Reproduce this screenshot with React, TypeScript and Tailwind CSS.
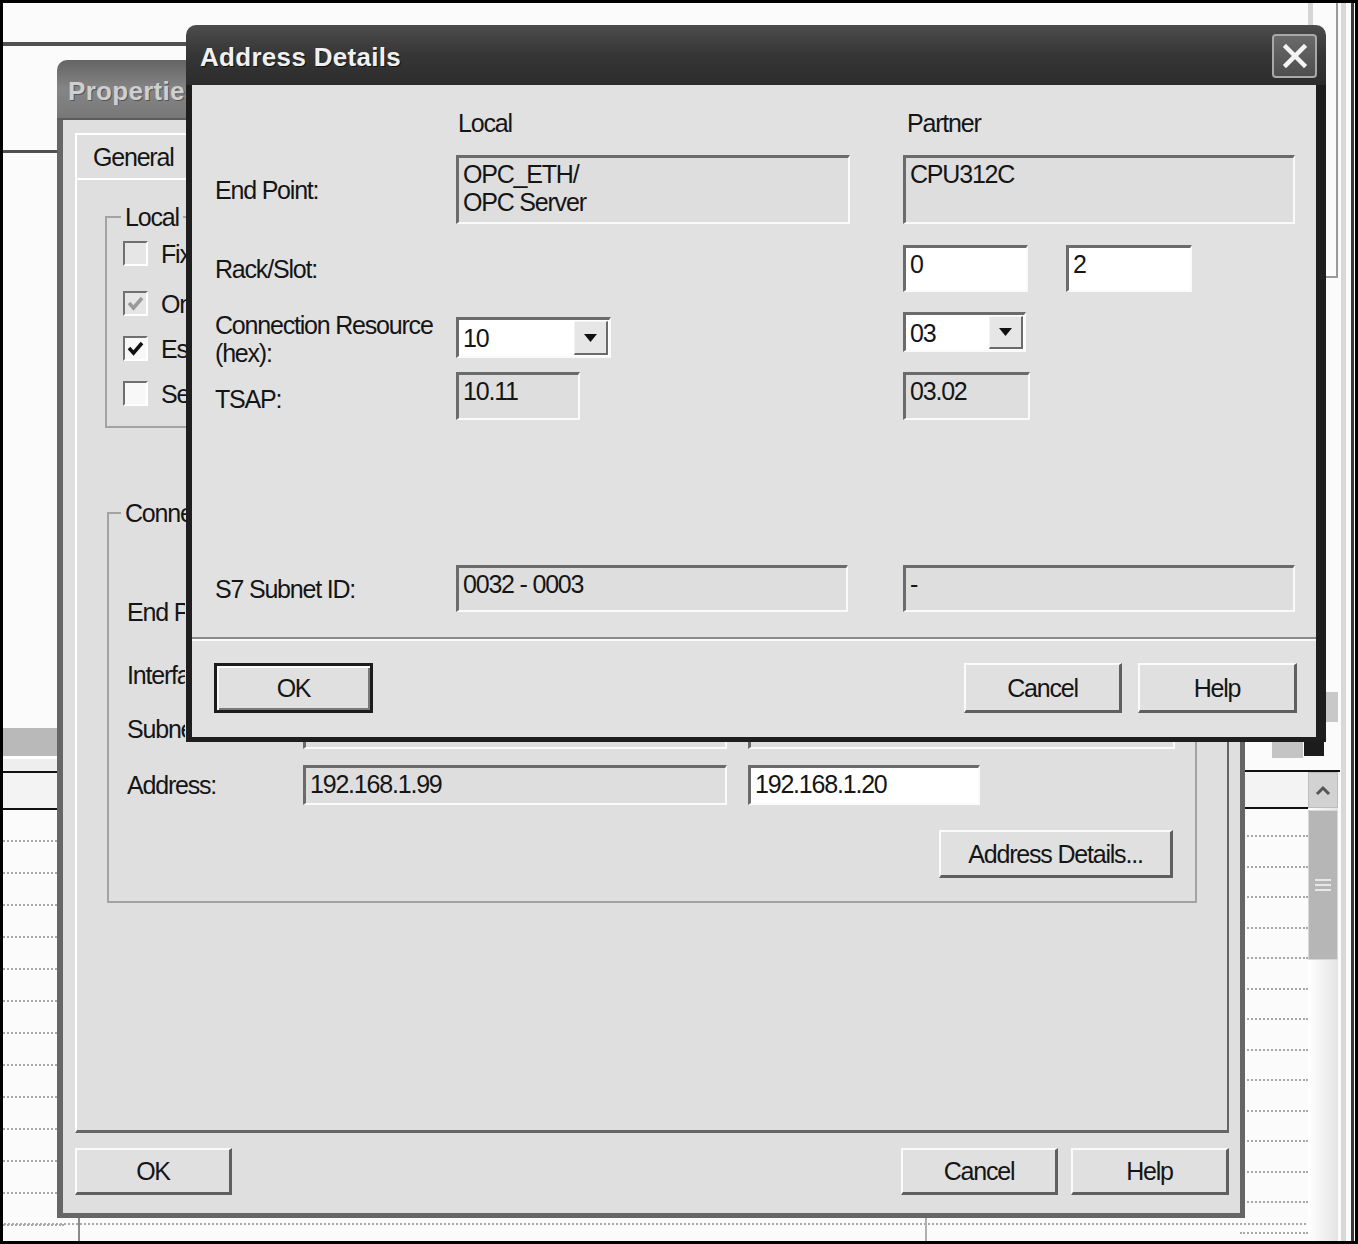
import React from "react";

const T = "text-[25px] leading-[28px] tracking-[-1.2px] text-[#151515]";

function Sunken({
  className = "",
  white = false,
  children,
}: {
  className?: string;
  white?: boolean;
  children?: React.ReactNode;
}) {
  return (
    <div
      className={`shrink-0 border-t-[3px] border-l-[3px] border-b-[2px] border-r-[2px] border-t-[#6b6b6b] border-l-[#6b6b6b] border-b-[#fafafa] border-r-[#fafafa] pl-[4px] pt-[2px] overflow-hidden whitespace-nowrap ${
        white ? "bg-white" : "bg-[#dedede]"
      } ${T} ${className}`}
    >
      {children}
    </div>
  );
}

function Combo({ className = "", value }: { className?: string; value: string }) {
  return (
    <div
      className={`shrink-0 flex items-stretch border-t-[3px] border-l-[3px] border-b-[2px] border-r-[2px] border-t-[#6b6b6b] border-l-[#6b6b6b] border-b-[#fafafa] border-r-[#fafafa] bg-white ${className}`}
    >
      <div className={`flex-1 flex items-center pl-[4px] ${T}`}>{value}</div>
      <div className="w-[34px] my-[1px] mr-[1px] flex items-center justify-center bg-[#e6e6e6] border-t border-l border-t-[#f4f4f4] border-l-[#f4f4f4] border-b-2 border-r-2 border-b-[#6a6a6a] border-r-[#6a6a6a]">
        <svg width="13" height="8" viewBox="0 0 13 8">
          <polygon points="0,0 13,0 6.5,8" fill="#111" />
        </svg>
      </div>
    </div>
  );
}

function Btn({
  className = "",
  def = false,
  children,
}: {
  className?: string;
  def?: boolean;
  children: React.ReactNode;
}) {
  return (
    <div
      className={`shrink-0 flex items-center justify-center bg-[#e0e0e0] ${
        def
          ? "border-[3px] border-[#1c1c1c] shadow-[inset_2px_2px_0_#fafafa,inset_-2px_-2px_0_#7a7a7a]"
          : "border-t-2 border-l-2 border-t-[#fbfbfb] border-l-[#fbfbfb] border-b-[3px] border-r-[3px] border-b-[#5f5f5f] border-r-[#5f5f5f]"
      } ${T} ${className}`}
    >
      {children}
    </div>
  );
}

function Check({ checked = false, dim = false }: { checked?: boolean; dim?: boolean }) {
  return (
    <span
      className={`w-[25px] h-[25px] shrink-0 flex items-center justify-center border-t-2 border-l-2 border-t-[#6f6f6f] border-l-[#6f6f6f] border-b-2 border-r-2 border-b-white border-r-white ${
        dim ? "bg-[#e6e6e6]" : "bg-[#f8f8f8]"
      }`}
    >
      {checked && (
        <svg width="17" height="15" viewBox="0 0 17 15">
          <path d="M2 7 L6.5 12 L15 2" fill="none" stroke={dim ? "#9a9a9a" : "#111"} strokeWidth="3.5" />
        </svg>
      )}
    </span>
  );
}

function Background() {
  const left = Array.from({ length: 13 });
  const right = Array.from({ length: 14 });
  return (
    <>
      <div className="absolute left-0 top-[42px] w-[1240px] h-[4px] bg-[#505050]" />
      <div className="absolute left-0 top-[150px] w-[70px] h-[3px] bg-[#505050]" />

      <div className="absolute left-0 top-[728px] w-[64px] h-[500px] flex flex-col">
        <div className="h-[28px] shrink-0 bg-[#b9b9b9]" />
        <div className="h-[15px] shrink-0 bg-[#eeeeee] border-t-[3px] border-white" />
        <div className="h-[2px] shrink-0 bg-[#111]" />
        <div className="h-[35px] shrink-0 bg-[#f3f3f3]" />
        <div className="h-[2px] shrink-0 bg-[#111]" />
        {left.map((_, i) => (
          <div key={i} className="h-[32px] shrink-0 border-b-2 border-dotted border-[#a8a8a8]" />
        ))}
      </div>

      <div className="absolute left-0 top-[1218px] w-[1310px] h-[26px]">
        <div className="h-[7px] border-b-2 border-dotted border-[#a8a8a8]" />
      </div>
      <div className="absolute left-[78px] top-[1218px] w-[2px] h-[26px] bg-[#8a8a8a]" />
      <div className="absolute left-[925px] top-[1218px] w-[2px] h-[26px] bg-[#b0b0b0]" />

      <div className="absolute left-[1240px] top-[770px] w-[68px] h-[460px] flex flex-col">
        <div className="h-[2px] shrink-0 bg-[#111]" />
        <div className="h-[35px] shrink-0 bg-[#f3f3f3]" />
        <div className="h-[2px] shrink-0 bg-[#111]" />
        <div className="h-[28px] shrink-0 border-b-2 border-dotted border-[#a8a8a8]" />
        {right.map((_, i) => (
          <div key={i} className="h-[30.5px] shrink-0 border-b-2 border-dotted border-[#a8a8a8]" />
        ))}
      </div>
      <div className="absolute left-[1300px] top-[770px] w-[40px] h-[2px] bg-[#111]" />

      <div className="absolute left-[1308px] top-[772px] w-[30px] h-[470px] flex flex-col bg-gradient-to-r from-white to-[#e4e4e4]">
        <div className="h-[36px] shrink-0 flex items-center justify-center bg-[#d2d2d2] border border-[#bdbdbd]">
          <svg width="18" height="12" viewBox="0 0 18 12">
            <path d="M3 10 L9 4 L15 10" fill="none" stroke="#555" strokeWidth="3" />
          </svg>
        </div>
        <div className="h-[150px] shrink-0 mt-[2px] flex flex-col items-center justify-center gap-[3px] bg-[#b6b6b6] border border-[#d8d8d8]">
          <div className="w-[16px] h-[2px] bg-[#e8e8e8]" />
          <div className="w-[16px] h-[2px] bg-[#e8e8e8]" />
          <div className="w-[16px] h-[2px] bg-[#e8e8e8]" />
        </div>
      </div>

      <div className="absolute left-[1308px] top-0 w-[5px] h-[277px] bg-[#d5d5d5]" />
      <div className="absolute left-[1336px] top-0 w-[2px] h-[278px] bg-[#9a9a9a]" />
      <div className="absolute left-[1326px] top-[276px] w-[12px] h-[2px] bg-[#9a9a9a]" />
      <div className="absolute left-[1341px] top-0 w-[5px] h-[1244px] bg-[#d8d8d8]" />
      <div className="absolute left-[1351px] top-0 w-[3px] h-[1244px] bg-[#3a3a3a]" />
      <div className="absolute left-[1326px] top-[692px] w-[12px] h-[30px] bg-[#c8c8c8]" />
      <div className="absolute left-[1272px] top-[741px] w-[31px] h-[17px] bg-[#c4c4c4]" />
      <div className="absolute left-[1304px] top-[740px] w-[20px] h-[16px] bg-[#1c1c1c]" />
    </>
  );
}

function PropertiesWindow() {
  const row = "flex items-center pl-[18px] h-[40px]";
  const lab = `w-[176px] shrink-0 ${T}`;
  const clip = "block w-[58px] overflow-hidden whitespace-nowrap";
  return (
    <div className="absolute left-[57px] top-[60px] w-[1188px] h-[1158px] flex flex-col rounded-t-[10px] overflow-hidden">
      <div className="h-[60px] shrink-0 flex items-center pl-[11px] pt-[3px] bg-gradient-to-b from-[#646464] via-[#858585] to-[#787878] border-b-2 border-[#5c5c5c]">
        <span className="block w-[118px] overflow-hidden text-[26px] leading-[28px] font-bold tracking-[0.3px] text-[#cfcfcf] [text-shadow:1px_1px_0_#555] whitespace-nowrap">
          Properties - S7 connection
        </span>
      </div>
      <div className="flex-1 flex flex-col bg-[#dfdfdf] border-l-[6px] border-r-[5px] border-b-[5px] border-[#666666] pl-[12px] pr-[11px] pt-[13px]">
        <div className="h-[45px] shrink-0 flex">
          <div className={`w-[118px] h-[45px] flex items-center pl-[16px] border-t-2 border-l-2 border-white border-r-2 border-r-[#7a7a7a] ${T}`}>
            General
          </div>
        </div>
        <div className="h-[955px] shrink-0 border-l-2 border-t-2 border-white border-r-2 border-r-[#666] border-b-[3px] border-b-[#666] pl-[28px] pt-[23px]">
          <fieldset className="w-[1092px] h-[225px] border-2 border-[#a3a3a3]">
            <legend className={`ml-[14px] px-[4px] ${T}`}>Local</legend>
            <div className="flex flex-col pl-[16px]">
              <div className="mt-[10px] h-[25px] flex items-center gap-[13px]">
                <Check dim />
                <span className={`w-[40px] overflow-hidden whitespace-nowrap ${T} text-[#9a9a9a]`}>Fixed configured connection</span>
              </div>
              <div className="mt-[25px] h-[25px] flex items-center gap-[13px]">
                <Check dim checked />
                <span className={`w-[40px] overflow-hidden whitespace-nowrap ${T} text-[#9a9a9a]`}>One-way</span>
              </div>
              <div className="mt-[20px] h-[25px] flex items-center gap-[13px]">
                <Check checked />
                <span className={`w-[40px] overflow-hidden whitespace-nowrap ${T}`}>Establish an active connection</span>
              </div>
              <div className="mt-[20px] h-[25px] flex items-center gap-[13px]">
                <Check />
                <span className={`w-[40px] overflow-hidden whitespace-nowrap ${T} text-[#9a9a9a]`}>Send operating mode messages</span>
              </div>
            </div>
          </fieldset>
          <fieldset className="ml-[2px] mt-[71px] w-[1090px] h-[404px] border-2 border-[#a3a3a3]">
            <legend className={`ml-[12px] px-[4px] ${T}`}>Connection Partner</legend>
            <div className="flex flex-col">
              <div className={`mt-[65px] ${row}`}>
                <span className={lab}>
                  <span className={clip}>End Point:</span>
                </span>
                <Sunken className="w-[424px] h-[40px]" />
                <Sunken className="ml-[21px] w-[427px] h-[40px]" />
              </div>
              <div className={`mt-[23px] ${row}`}>
                <span className={lab}>
                  <span className={clip}>Interface:</span>
                </span>
                <Sunken className="w-[424px] h-[40px]" />
                <Sunken className="ml-[21px] w-[427px] h-[40px]" />
              </div>
              <div className={`mt-[14px] ${row}`}>
                <span className={lab}>
                  <span className={clip}>Subnet:</span>
                </span>
                <Sunken className="w-[424px] h-[40px]" />
                <Sunken className="ml-[21px] w-[427px] h-[40px]" />
              </div>
              <div className={`mt-[16px] ${row}`}>
                <span className={lab}>Address:</span>
                <Sunken className="w-[424px] h-[40px]">192.168.1.99</Sunken>
                <Sunken white className="ml-[21px] w-[232px] h-[40px]">192.168.1.20</Sunken>
              </div>
              <div className="mt-[25px] flex justify-end pr-[22px]">
                <Btn className="w-[234px] h-[48px]">Address Details...</Btn>
              </div>
            </div>
          </fieldset>
        </div>
        <div className="mt-[15px] h-[47px] shrink-0 flex">
          <Btn className="w-[157px] h-[47px]">OK</Btn>
          <Btn className="ml-auto w-[157px] h-[47px]">Cancel</Btn>
          <Btn className="ml-[13px] w-[158px] h-[47px]">Help</Btn>
        </div>
      </div>
    </div>
  );
}

function AddressDetails() {
  const grid = "grid grid-cols-[241px_394px_53px_392px]";
  return (
    <div className="absolute left-[186px] top-[25px] w-[1140px] h-[717px] flex flex-col rounded-t-[10px] overflow-hidden">
      <div className="h-[60px] shrink-0 flex items-center justify-between pl-[14px] pr-[9px] bg-gradient-to-b from-[#4c4c4c] via-[#363636] to-[#2c2c2c]">
        <span className="mt-[4px] text-[26px] leading-[28px] font-bold tracking-[0.3px] text-[#f0f0f0] [text-shadow:1px_1px_0_#111] whitespace-nowrap">
          Address Details
        </span>
        <div className="w-[45px] h-[44px] mt-[2px] flex items-center justify-center rounded-[4px] border-2 border-[#a8a8a8] bg-gradient-to-b from-[#6a6a6a] to-[#4e4e4e]">
          <svg width="26" height="26" viewBox="0 0 26 26">
            <path d="M4 4 L22 22 M22 4 L4 22" stroke="#f4f4f4" strokeWidth="4.5" strokeLinecap="square" />
          </svg>
        </div>
      </div>
      <div className="flex-1 flex flex-col bg-[#e1e1e1] border-l-[6px] border-r-[10px] border-b-[5px] border-[#1e1e1e]">
        <div className="flex flex-col pl-[23px] pt-[24px]">
          <div className={`${grid} grid-rows-[28px] h-[28px]`}>
            <span />
            <span className={`${T} pl-[2px]`}>Local</span>
            <span />
            <span className={`${T} pl-[4px]`}>Partner</span>
          </div>
          <div className={`${grid} grid-rows-[69px] mt-[18px] h-[69px]`}>
            <span className={`${T} self-center`}>End Point:</span>
            <Sunken className="w-[394px] h-[69px]">
              OPC_ETH/
              <br />
              OPC Server
            </Sunken>
            <span />
            <Sunken className="w-[392px] h-[69px]">CPU312C</Sunken>
          </div>
          <div className={`${grid} grid-rows-[47px] mt-[21px] h-[47px]`}>
            <span className={`${T} self-center`}>Rack/Slot:</span>
            <span />
            <span />
            <div className="flex gap-[38px]">
              <Sunken white className="w-[125px] h-[47px]">0</Sunken>
              <Sunken white className="w-[126px] h-[47px]">2</Sunken>
            </div>
          </div>
          <div className={`${grid} grid-rows-[46px] mt-[20px] h-[46px]`}>
            <span className={`${T} self-start mt-[-1px] h-[46px] overflow-visible`}>
              Connection Resource
              <br />
              (hex):
            </span>
            <Combo className="w-[155px] h-[41px] self-end" value="10" />
            <span />
            <Combo className="w-[123px] h-[40px] self-start" value="03" />
          </div>
          <div className={`${grid} grid-rows-[48px] mt-[14px] h-[48px]`}>
            <span className={`${T} self-center mt-[6px]`}>TSAP:</span>
            <Sunken className="w-[124px] h-[48px]">10.11</Sunken>
            <span />
            <Sunken className="w-[127px] h-[48px]">03.02</Sunken>
          </div>
          <div className={`${grid} grid-rows-[47px] mt-[145px] h-[47px]`}>
            <span className={`${T} self-center`}>S7 Subnet ID:</span>
            <Sunken className="w-[392px] h-[47px]">0032 - 0003</Sunken>
            <span />
            <Sunken className="w-[392px] h-[47px]">-</Sunken>
          </div>
        </div>
        <div className="mt-[25px] h-[4px] shrink-0 border-t-2 border-[#8a8a8a] border-b-2 border-b-[#fafafa]" />
        <div className="mt-[22px] h-[50px] shrink-0 flex pl-[22px] pr-[19px]">
          <Btn def className="w-[159px] h-[50px]">
            OK
          </Btn>
          <Btn className="ml-auto w-[158px] h-[50px]">Cancel</Btn>
          <Btn className="ml-[16px] w-[159px] h-[50px]">Help</Btn>
        </div>
      </div>
    </div>
  );
}

export default function App() {
  return (
    <div className="relative w-[1358px] h-[1244px] overflow-hidden bg-[#fbfbfb] font-['Liberation_Sans',Arial,sans-serif]">
      <Background />
      <PropertiesWindow />
      <AddressDetails />
      <div className="pointer-events-none absolute inset-0 border-l-[3px] border-t-[3px] border-b-[3px] border-r-[3px] border-black" />
    </div>
  );
}
